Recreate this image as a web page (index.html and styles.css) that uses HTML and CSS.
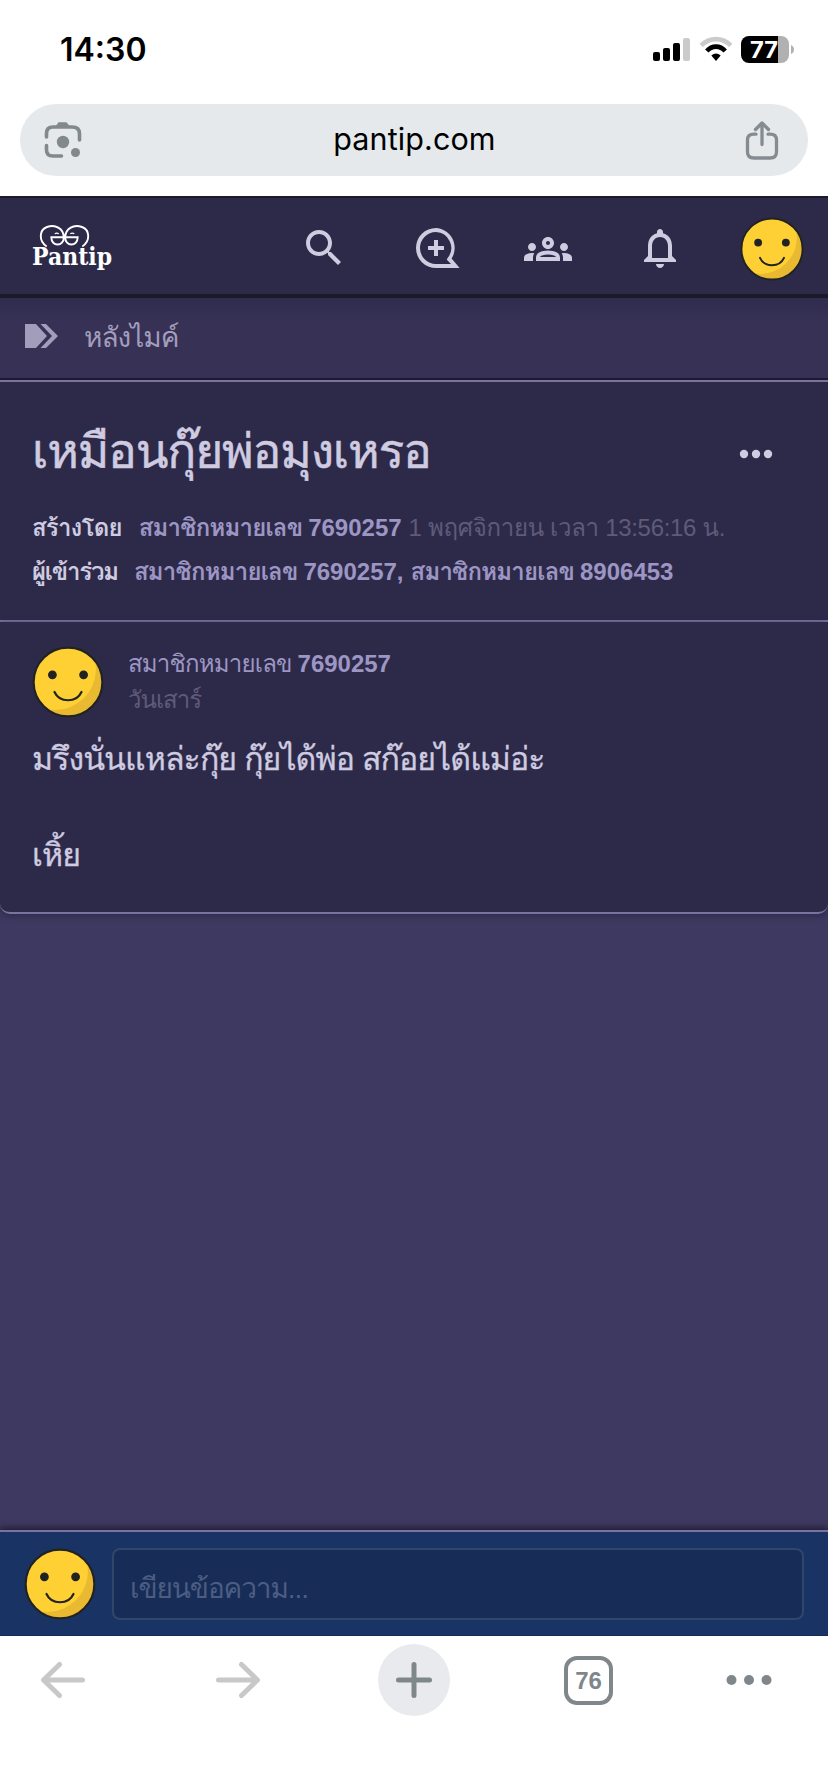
FILE: index.html
```html
<!DOCTYPE html>
<html lang="th">
<head>
<meta charset="utf-8">
<title>Pantip</title>
<link rel="stylesheet" href="styles.css">
</head>
<body>
<svg class="defs" width="0" height="0">
  <symbol id="smile" viewBox="0 0 72 72">
    <circle cx="36" cy="36" r="34.2" fill="#e9b931"/>
    <clipPath id="face"><circle cx="36" cy="36" r="34.2"/></clipPath>
    <circle cx="23" cy="23" r="41" fill="#ffd034" clip-path="url(#face)"/>
    <circle cx="36" cy="36" r="34.4" fill="none" stroke="#212322" stroke-width="2.2"/>
    <circle cx="20.4" cy="28.8" r="4.4" fill="#212322"/>
    <circle cx="51.6" cy="28.8" r="4.4" fill="#212322"/>
    <path d="M22.500 46c5 11 22 11 27 0" fill="none" stroke="#212322" stroke-width="2.200" stroke-linecap="round"/>
  </symbol>
</svg>
<div class="phone">
  <div class="chrome">
  <header class="status">
    <span class="clock">14:30</span>
    <svg width="144" height="32" viewBox="0 0 144 32">
      <rect x="1" y="18" width="7" height="9" rx="2"/><rect x="11" y="14" width="7" height="13" rx="2"/><rect x="21" y="9" width="7" height="18" rx="2"/><rect x="31" y="4" width="7" height="23" rx="2" fill="#cbcbcb"/>
      <path d="M49.200 11.500C57.500 3 70.500 3 78.800 11.500" fill="none" stroke="#cbcbcb" stroke-width="4.600"/>
      <path d="M54.800 17C60 11.200 68 11.200 73.200 17" fill="none" stroke="#000" stroke-width="4.600"/>
      <path d="M59.300 21.500Q64 17.300 68.700 21.500L64 27Z"/>
      <clipPath id="batt"><rect x="89" y="2" width="48" height="27" rx="8"/></clipPath>
      <g clip-path="url(#batt)"><rect x="89" y="2" width="37" height="27"/><rect x="126" y="2" width="11" height="27" fill="#b1b1b1"/></g>
      <path d="M139 11v9q3-1.500 3-4.500t-3-4.500z" fill="#b1b1b1"/>
      <text class="batt" x="98" y="24" textLength="28" lengthAdjust="spacingAndGlyphs">77</text>
    </svg>
  </header>
  <div class="address">
    <svg width="38" height="38" viewBox="0 0 38 38" fill="none" stroke="#81898c" stroke-width="3.600" stroke-linecap="round">
      <path d="M2.500 16V12.500Q2.500 6 9 6H28Q35.500 6 35.500 12.500V19M2.500 24.500V29Q2.500 35 9 35H17.500"/>
      <path d="M11.500 5.500L14.500 1.200H22.500L26 5.500V7H11.500Z" fill="#81898c" stroke="none"/>
      <circle cx="19" cy="21" r="6.200" fill="#81898c" stroke="none"/><circle cx="31.500" cy="31.500" r="4.500" fill="#81898c" stroke="none"/>
    </svg>
    <span class="host">pantip.com</span>
    <svg width="34" height="40" viewBox="0 0 34 40" fill="none" stroke="#858c91" stroke-width="3.300" stroke-linecap="round" stroke-linejoin="round">
      <path d="M11 14.200H9Q2.500 14.200 2.500 20V32Q2.500 38 9 38H25Q31.500 38 31.500 32V20Q31.500 14.200 25 14.200H23M17 24.500V3.500M10.500 9.500L17 3L23.500 9.500" />
    </svg>
  </div>
  </div>
  <nav class="nav">
    <svg class="logo" width="84" height="66" viewBox="0 -8 84 66">
      <g fill="none" stroke="#fff" stroke-width="1.900">
        <path d="M14.700 23.500C6.500 18 7 7 15 4C24 1 31.500 6 31.800 14C32 24 19.300 24 19.300 14.300H45.700C45.700 24 33 24 33.200 14C33.500 6 41 1 50 4C58 7 58.500 18 50.300 23.500"/>
        <path d="M22.800 10.800q2-1.200 4 0M38.300 10.800q2-1.200 4 0" stroke-width="1.200"/>
      </g>
      <text class="brand" x="0" y="42" textLength="80" lengthAdjust="spacingAndGlyphs">Pantip</text>
    </svg>
    <div class="menu">
      <svg class="icon" viewBox="0 0 24 24"><path d="M15.500 14h-.79l-.28-.27C15.410 12.590 16 11.110 16 9.500 16 5.910 13.090 3 9.500 3S3 5.910 3 9.500 5.910 16 9.500 16c1.610 0 3.090-.59 4.230-1.570l.27.28v.79l5 4.990L20.490 19l-4.990-5zm-6 0C7.010 14 5 11.990 5 9.500S7.010 5 9.500 5 14 7.010 14 9.500 11.990 14 9.500 14z"/></svg>
      <svg class="icon" viewBox="0 0 24 24"><path fill-rule="evenodd" d="M12 2A10 10 0 0 1 19.800 17.300L23.800 22H12A10 10 0 0 1 12 2ZM12 4A8 8 0 0 0 12 20H19.500L17.400 17.900A3 3 0 0 1 18 16.800A8 8 0 0 0 12 4ZM11 8h2v3h3v2h-3v3h-2v-3H8v-2h3z"/></svg>
      <svg class="icon groups" viewBox="0 0 24 24"><path d="M4 13c1.100 0 2-.9 2-2s-.9-2-2-2-2 .9-2 2 .9 2 2 2zm1.130 1.100c-.37-.06-.74-.1-1.130-.1-.99 0-1.930.21-2.780.58C.48 14.900 0 15.620 0 16.430V18h4.500v-1.610c0-.83.23-1.610.63-2.290zM20 13c1.100 0 2-.9 2-2s-.9-2-2-2-2 .9-2 2 .9 2 2 2zm4 3.430c0-.81-.48-1.530-1.220-1.850-.85-.37-1.790-.58-2.780-.58-.39 0-.76.04-1.130.1.4.68.63 1.460.63 2.290V18H24v-1.570zm-7.760-2.780c-1.170-.52-2.610-.9-4.240-.9-1.630 0-3.070.39-4.240.9C6.680 14.130 6 15.210 6 16.390V18h12v-1.610c0-1.180-.68-2.260-1.760-2.740zM8.070 16c.09-.23.13-.39.91-.69.97-.38 1.990-.56 3.020-.56s2.050.18 3.020.56c.77.3.81.46.91.69H8.070zM12 8c.55 0 1 .45 1 1s-.45 1-1 1-1-.45-1-1 .45-1 1-1m0-2c-1.660 0-3 1.340-3 3s1.340 3 3 3 3-1.340 3-3-1.340-3-3-3z"/></svg>
      <svg class="icon" viewBox="0 0 24 24"><path d="M12 22c1.100 0 2-.9 2-2h-4c0 1.100.9 2 2 2zm6-6v-5c0-3.070-1.630-5.640-4.500-6.320V4c0-.83-.67-1.500-1.500-1.500s-1.500.67-1.500 1.500v.68C7.640 5.360 6 7.920 6 11v5l-2 2v1h16v-1l-2-2zm-2 1H8v-6c0-2.480 1.510-4.500 4-4.500s4 2.020 4 4.500v6z"/></svg>
      <svg class="me"><use href="#smile"/></svg>
    </div>
  </nav>
  <div class="crumb">
    <svg width="34" height="24" viewBox="0 0 34 24" fill="#a29dbb"><path d="M0 0H11L22 12 11 24H0ZM15.500 0H21L33 12 21 24H15.500L27 12Z"/></svg>
    <span class="room">หลังไมค์</span>
  </div>
  <section class="topic">
    <div class="headline"><h1 class="title">เหมือนกุ๊ยพ่อมุงเหรอ</h1>
      <svg width="34" height="10" viewBox="0 0 34 10" fill="#cfcbe0"><circle cx="5" cy="5" r="4.200"/><circle cx="17" cy="5" r="4.200"/><circle cx="29" cy="5" r="4.200"/></svg>
    </div>
    <p class="meta"><b class="label by">สร้างโดย</b><b class="user">สมาชิกหมายเลข <span class="num">7690257</span></b><span class="date">1 พฤศจิกายน เวลา 13:56:16 น.</span></p>
    <p class="meta"><b class="label with">ผู้เข้าร่วม</b><b class="user">สมาชิกหมายเลข <span class="num">7690257,</span></b><b class="user">สมาชิกหมายเลข <span class="num">8906453</span></b></p>
  </section>
  <article class="comment">
    <div class="author">
      <svg class="avatar"><use href="#smile"/></svg>
      <div><div class="name">สมาชิกหมายเลข <b class="num">7690257</b></div><div class="day">วันเสาร์</div></div>
    </div>
    <p class="line">มรึงนั่นแหล่ะกุ๊ย กุ๊ยได้พ่อ สก๊อยได้แม่อ่ะ</p>
    <p class="line">เหิ้ย</p>
  </article>
  <main class="space"></main>
  <div class="composer">
    <svg class="avatar"><use href="#smile"/></svg>
    <div class="field"><span class="hint">เขียนข้อความ...</span></div>
  </div>
  <footer class="toolbar">
    <svg width="46" height="38" viewBox="0 0 46 38" fill="none" stroke="#c8c8c8" stroke-width="5" stroke-linecap="round" stroke-linejoin="round"><path d="M42.500 19H4M19.500 3.500L3.500 19L19.500 34.500"/></svg>
    <svg width="46" height="38" viewBox="0 0 46 38" fill="none" stroke="#c8c8c8" stroke-width="5" stroke-linecap="round" stroke-linejoin="round"><path d="M3.500 19H42M26.500 3.500L42.500 19L26.500 34.500"/></svg>
    <div class="add"><svg width="38" height="38" viewBox="0 0 38 38" fill="none" stroke="#7f878b" stroke-width="5" stroke-linecap="round"><path d="M3.500 19H34.500M19 3.500V34.500"/></svg></div>
    <div class="tabs">76</div>
    <svg class="more" width="46" height="12" viewBox="0 0 46 12" fill="#7f878b"><circle cx="5.500" cy="6" r="5"/><circle cx="23" cy="6" r="5"/><circle cx="40.500" cy="6" r="5"/></svg>
  </footer>
</div>
</body>
</html>
```
FILE: styles.css
```css
* { box-sizing: border-box; }
body { margin: 0; font-family: "Liberation Sans", "Loma", "Noto Sans Thai Looped", "Noto Sans Thai", sans-serif; }
h1, p { margin: 0; }
svg { display: block; flex: none; }
.defs { position: absolute; }
.phone { width: 828px; height: 1792px; display: flex; flex-direction: column; background: #3d3960; overflow: hidden; }
.phone > * { flex: none; }

.chrome { height: 196px; background: #fff; }
.status { height: 104px; padding: 34px 32px 0 60px; display: flex; justify-content: space-between; align-items: flex-start; }
.clock { font: 600 32px/32px Inter, sans-serif; letter-spacing: 0; }
.batt { font: 700 23px Inter, sans-serif; fill: #fff; }
.address { height: 72px; margin: 0 20px; padding: 0 29px 0 24px; border-radius: 36px; background: #e5e9ec; display: flex; align-items: center; justify-content: space-between; }
.host { font: 400 30.5px/36px Inter, sans-serif; letter-spacing: .1px; margin: 0 0 3px 2px; }

.nav { height: 102px; border-top: 2px solid #1c1a2c; border-bottom: 4px solid #1c192b; background: #2d2a49; padding: 4px 0 0 32px; display: flex; align-items: center; justify-content: space-between; }
.logo { overflow: visible; }
.brand { font: 700 25px "DejaVu Serif", serif; fill: #fff; }
.menu { width: 560px; display: grid; grid-template-columns: repeat(5, 112px); place-items: center; }
.icon { width: 48px; height: 48px; fill: #cfcbe0; }
.groups { margin-top: 2px; }
.me { width: 64px; height: 64px; margin-top: 2px; }

.crumb { height: 82px; padding: 0 25px 4px; display: flex; align-items: center; gap: 25px; background: linear-gradient(#302c4e, #363155 22px); border-bottom: 2px solid #1e1b2e; color: #a29dbb; }
.room { font-size: 28px; line-height: 40px; letter-spacing: -1px; padding-top: 4px; white-space: nowrap; }

.topic { height: 242px; padding: 30px 32px 0; background: #2d2a49; border-top: 2px solid #7a739f; border-bottom: 2px solid #7a739f; }
.headline { display: flex; justify-content: space-between; align-items: center; height: 94px; padding: 0 23px 10px 0; }
.title { font-size: 48px; font-weight: 400; line-height: 80px; letter-spacing: -1.2px; margin-bottom: 4px; color: #cfcbe0; white-space: nowrap; -webkit-text-stroke: .5px #cfcbe0; }
.meta { display: flex; height: 44px; line-height: 44px; font-size: 24px; letter-spacing: -.8px; white-space: nowrap; }
.num { letter-spacing: 0; }
.label { color: #cfcbe0; margin-right: 17px; }
.with { letter-spacing: -1.2px; margin-right: 16px; }
.user { color: #9d96c4; margin-right: 7px; }
.date { color: #5f5a78; letter-spacing: -.3px; }

.comment { height: 292px; padding: 24px 32px 0; background: #2d2a49; border-bottom: 2px solid #7a739f; border-radius: 0 0 10px 10px; box-shadow: 0 2px 6px #2d2a49; }
.author { display: flex; gap: 24px; height: 89px; }
.avatar { width: 72px; height: 72px; }
.name { font-size: 24px; line-height: 36px; letter-spacing: -.8px; color: #9d96c4; white-space: nowrap; }
.day { font-size: 24px; line-height: 36px; letter-spacing: -1px; color: #5f5a78; }
.line { font-size: 32px; line-height: 48px; height: 96px; letter-spacing: -.92px; color: #cfcbe0; white-space: nowrap; -webkit-text-stroke: .3px #cfcbe0; }

.phone > .space { flex: 1; }
.composer { height: 106px; border-top: 2px solid #7a739f; border-bottom: 1px solid #142a52; background: #1a3365; padding: 0 24px; display: flex; align-items: center; gap: 16px; box-shadow: 0 -2px 6px #1e1b2e; }
.field { flex: 1; height: 72px; border: 2px solid #324669; border-radius: 8px; background: #172c57; padding-left: 16px; }
.hint { font-size: 28px; line-height: 78px; letter-spacing: -1.1px; color: #4c5d82; white-space: nowrap; }

.toolbar { height: 156px; background: #fff; padding: 8px 0 0 40px; display: grid; grid-template-columns: 175px 163px 186px 162px auto; align-items: start; justify-items: start; }
.toolbar > svg { margin-top: 17px; }
.toolbar > .more { margin-top: 30px; }
.add { width: 72px; height: 72px; border-radius: 50%; background: #e8eaed; display: grid; place-items: center; }
.tabs { width: 49px; height: 49px; margin-top: 12px; border: 4px solid #7f878b; border-radius: 13px; color: #7f878b; font: 700 24px/42px "Liberation Sans", sans-serif; text-align: center; }
```
